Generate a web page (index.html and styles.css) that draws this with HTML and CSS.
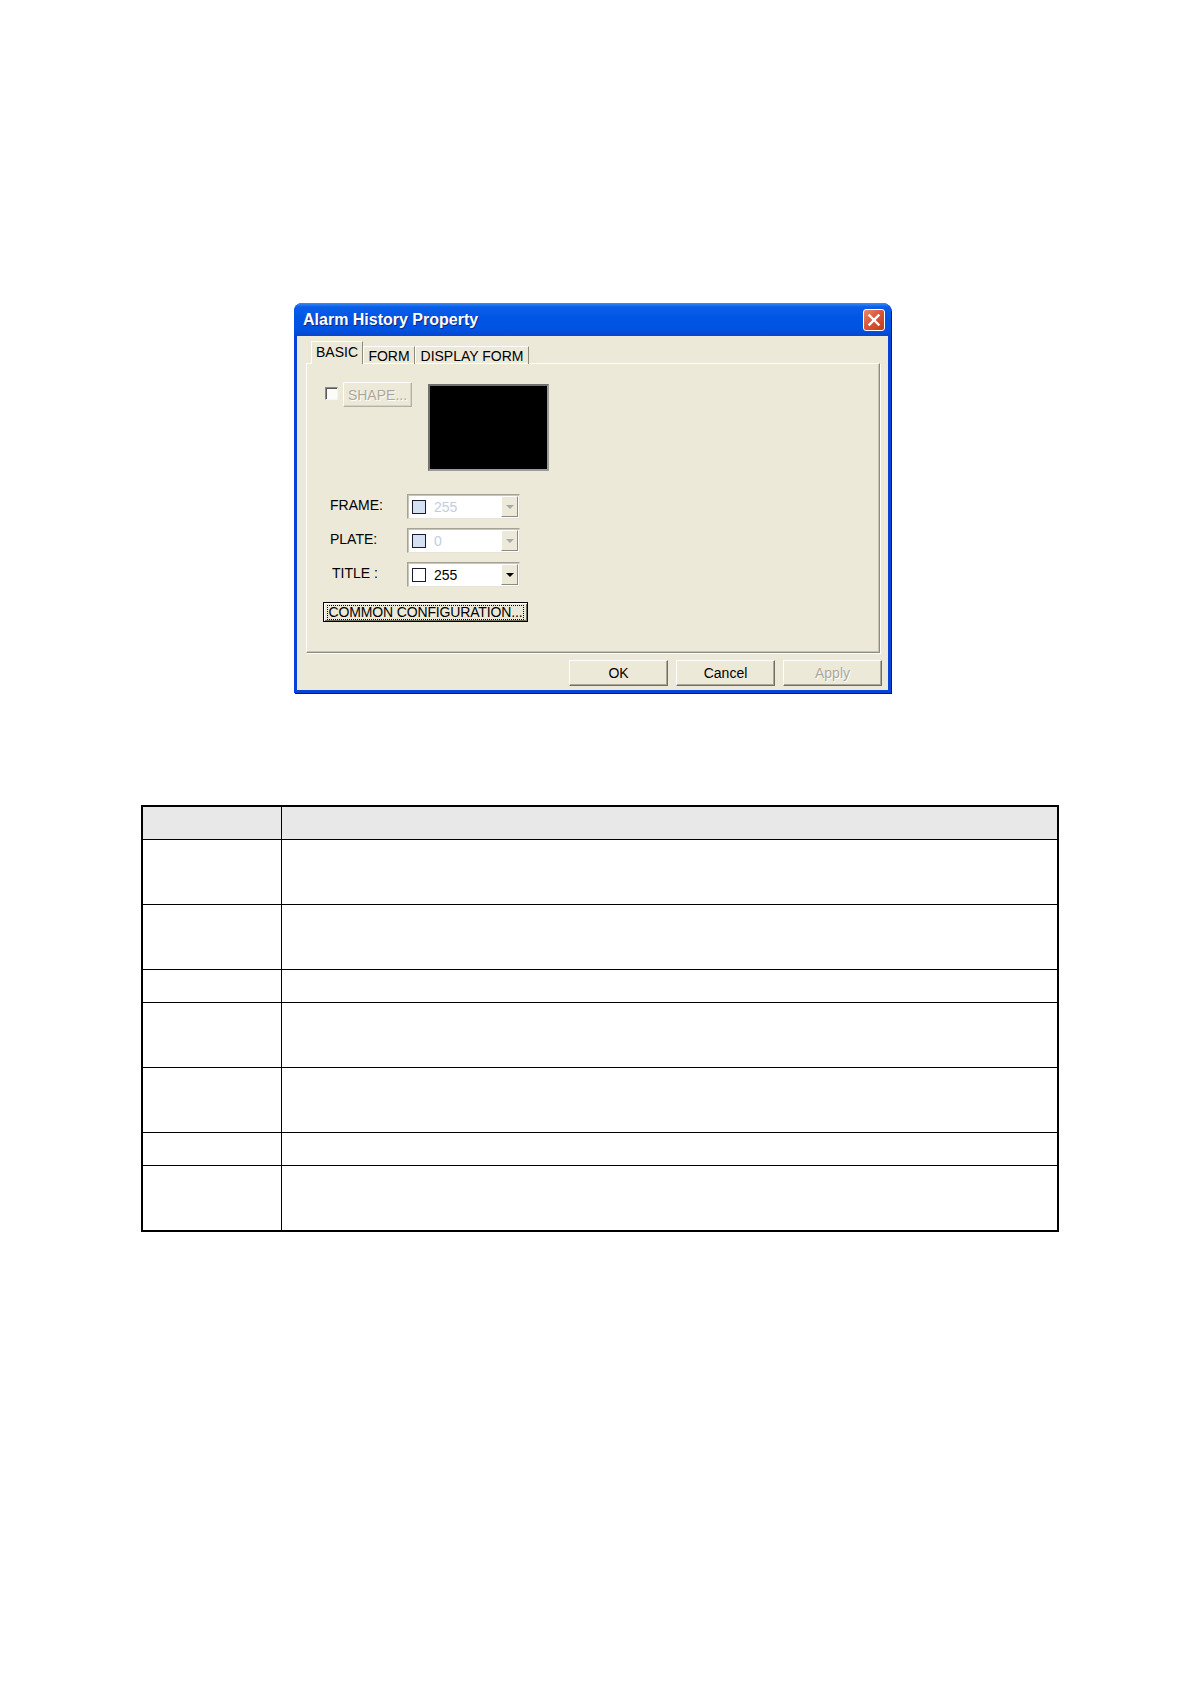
FILE: index.html
```html
<!DOCTYPE html>
<html>
<head>
<meta charset="utf-8">
<title>Alarm History Property</title>
<link rel="stylesheet" href="styles.css">
</head>
<body>
<div class="page">
  <div class="dialog">
    <div class="titlebar">
      <span class="title">Alarm History Property</span>
      <span class="close">
        <svg width="20" height="20" viewBox="0 0 20 20"><path d="M5.5 5.5 L14.5 14.5 M14.5 5.5 L5.5 14.5" stroke="#fff" stroke-width="2.4" stroke-linecap="square" fill="none"/></svg>
      </span>
    </div>
    <div class="body">
      <div class="tabs">
        <div class="tab active">BASIC</div>
        <div class="tab t-form">FORM</div>
        <div class="tab t-display">DISPLAY FORM</div>
      </div>
      <div class="panel">
        <div class="shape-row">
          <span class="check"></span>
          <span class="btn shape-btn disabled">SHAPE...</span>
          <span class="preview"></span>
        </div>
        <div class="fields">
          <span class="label">FRAME:</span>
          <div class="combo disabled">
            <span class="swatch"></span><span class="value">255</span>
            <span class="drop"><span class="tri"></span></span>
          </div>
          <span class="label">PLATE:</span>
          <div class="combo disabled">
            <span class="swatch"></span><span class="value">0</span>
            <span class="drop"><span class="tri"></span></span>
          </div>
          <span class="label label-title">TITLE :</span>
          <div class="combo">
            <span class="swatch"></span><span class="value">255</span>
            <span class="drop"><span class="tri"></span></span>
          </div>
        </div>
        <div class="common"><span class="focus">COMMON CONFIGURATION...</span></div>
      </div>
      <div class="actions">
        <span class="btn action">OK</span>
        <span class="btn action">Cancel</span>
        <span class="btn action disabled">Apply</span>
      </div>
    </div>
  </div>

  <table class="grid">
    <tr class="head"><td class="c1"></td><td></td></tr>
    <tr class="tall"><td class="c1"></td><td></td></tr>
    <tr class="tall"><td class="c1"></td><td></td></tr>
    <tr class="short"><td class="c1"></td><td></td></tr>
    <tr class="tall"><td class="c1"></td><td></td></tr>
    <tr class="tall"><td class="c1"></td><td></td></tr>
    <tr class="short"><td class="c1"></td><td></td></tr>
    <tr class="tall last"><td class="c1"></td><td></td></tr>
  </table>
</div>
</body>
</html>
```
FILE: styles.css
```css
html, body {
  margin: 0;
  padding: 0;
  background: #fff;
}
body {
  font-family: "Liberation Sans", Arial, sans-serif;
  font-size: 14px;
  color: #000;
}
.page {
  padding-top: 303px;
}

/* ---------- dialog ---------- */
.dialog {
  box-sizing: border-box;
  width: 597px;
  margin-left: 294px;
  background: #0842d6;
  border-radius: 8px 8px 0 0;
  padding: 0 3px 3px;
  box-shadow: 1px 1px 0 #0a1a60;
}
.titlebar {
  height: 33px;
  margin: 0 -3px;
  padding: 0 6px 0 9px;
  display: flex;
  align-items: center;
  justify-content: space-between;
  border-radius: 8px 8px 0 0;
  background: linear-gradient(to bottom, #3b8cf5 0%, #0a5ee8 12%, #0055e5 45%, #0052e0 80%, #0846cf 100%);
}
.title {
  color: #fff;
  font-weight: bold;
  font-size: 16px;
  text-shadow: 1px 1px 0 #0b2a8a;
  letter-spacing: 0;
}
.close {
  box-sizing: border-box;
  width: 22px;
  height: 22px;
  border: 1px solid #fff;
  border-radius: 3px;
  background: linear-gradient(135deg, #e88a6a 0%, #d8583a 45%, #c33c1c 100%);
  display: flex;
  align-items: center;
  justify-content: center;
}
.close svg { display: block; }

.body {
  background: #ece9d8;
  height: 354px;
  box-sizing: border-box;
  padding: 6px 8px 3px 9px;
  display: flex;
  flex-direction: column;
}

/* ---------- tabs ---------- */
.tabs {
  display: flex;
  align-items: flex-end;
  height: 22px;
  margin-left: 5px;
  position: relative;
  z-index: 1;
  margin-bottom: -1px;
}
.tab {
  box-sizing: border-box;
  height: 18px;
  border-top: 1px solid #fff;
  border-left: 1px solid #fff;
  border-right: 1px solid #8d8b80;
  display: flex;
  align-items: center;
  justify-content: center;
  font-size: 14px;
  padding-top: 1px;
}
.tab.active {
  width: 52px;
  height: 23px;
  padding-bottom: 3px;
  background: #ece9d8;
}
.t-form { width: 52px; }
.t-display { width: 114px; }

/* ---------- panel ---------- */
.panel {
  box-sizing: border-box;
  width: 574px;
  height: 290px;
  border-top: 1px solid #fff;
  border-left: 1px solid #fff;
  border-right: 1px solid #8d8b80;
  border-bottom: 1px solid #8d8b80;
  box-shadow: 1px 1px 0 #fff, inset -1px -1px 0 #c7c4b4;
  padding: 18px 0 0 16px;
  display: flex;
  flex-direction: column;
  align-items: flex-start;
}
.shape-row {
  display: flex;
  align-items: flex-start;
  margin-left: 2px;
}
.check {
  box-sizing: border-box;
  width: 13px;
  height: 13px;
  margin-top: 5px;
  background: #fbfbf8;
  border: 1px solid;
  border-color: #8a8a8a #f4f4f4 #f4f4f4 #8a8a8a;
  box-shadow: inset 1px 1px 0 #5a5a5a;
}
.btn {
  box-sizing: border-box;
  display: flex;
  align-items: center;
  justify-content: center;
  background: #ece9d8;
  border: 1px solid;
  border-color: #fff #716f64 #716f64 #fff;
  box-shadow: inset -1px -1px 0 #aca899;
  font-size: 14px;
}
.btn.disabled {
  color: #aca899;
  text-shadow: 1px 1px 0 #fff;
}
.shape-btn {
  width: 69px;
  height: 25px;
  margin-left: 5px;
  border-color: #fff #b4b2a6 #b4b2a6 #fff;
  box-shadow: inset -1px -1px 0 #d6d3c4;
}
.preview {
  box-sizing: border-box;
  width: 121px;
  height: 87px;
  margin-left: 16px;
  margin-top: 2px;
  background: #000;
  border: 2px solid;
  border-color: #707070 #9c9c9c #9c9c9c #707070;
}

/* ---------- fields ---------- */
.fields {
  display: grid;
  grid-template-columns: 77px 113px;
  grid-auto-rows: 25px;
  row-gap: 9px;
  margin-top: 23px;
  margin-left: 7px;
  align-items: center;
}
.label {
  font-size: 14px;
  padding-bottom: 3px;
}
.label-title { padding-left: 2px; }
.combo {
  box-sizing: border-box;
  height: 25px;
  width: 113px;
  display: flex;
  align-items: center;
  background: #fff;
  border: 1px solid;
  border-color: #a5a396 #e6e4da #e6e4da #a5a396;
  box-shadow: inset 1px 1px 0 #c8c6b8;
}
.swatch {
  box-sizing: border-box;
  width: 14px;
  height: 14px;
  margin-left: 4px;
  border: 1px solid #1c1c30;
  background: #fff;
}
.combo.disabled .swatch { background: #d3e1f3; }
.value {
  margin-left: 8px;
  font-size: 14px;
}
.combo.disabled .value { color: #c5cddc; }
.drop {
  box-sizing: border-box;
  margin-left: auto;
  margin-right: 1px;
  width: 17px;
  height: 21px;
  background: #ece9d8;
  border: 1px solid;
  border-color: #fff #8d8b80 #8d8b80 #fff;
  display: flex;
  align-items: center;
  justify-content: center;
}
.tri {
  width: 0;
  height: 0;
  border-left: 4px solid transparent;
  border-right: 4px solid transparent;
  border-top: 4px solid #000;
}
.combo.disabled .tri { border-top-color: #a8a8a8; }

/* ---------- common button ---------- */
.common {
  box-sizing: border-box;
  width: 205px;
  height: 20px;
  margin-top: 15px;
  border: 1px solid #000;
  background: #ece9d8;
  box-shadow: inset 1px 1px 0 #fff, inset -1px -1px 0 #716f64;
  display: flex;
  align-items: center;
  justify-content: center;
}
.focus {
  box-sizing: border-box;
  border: 1px dotted #000;
  height: 15px;
  line-height: 13px;
  padding: 0 1px;
  font-size: 14px;
  letter-spacing: -0.15px;
  white-space: nowrap;
}

/* ---------- action buttons ---------- */
.actions {
  display: flex;
  justify-content: flex-end;
  gap: 8px;
  margin-top: 7px;
  padding-right: 0;
  margin-right: -2px;
}
.action {
  width: 99px;
  height: 26px;
}

/* ---------- table ---------- */
.grid {
  box-sizing: border-box;
  width: 918px;
  margin-left: 141px;
  margin-top: 112px;
  border-collapse: separate;
  border-spacing: 0;
  border: 2px solid #000;
}
.grid td {
  padding: 0;
  border-bottom: 1px solid #000;
}
.grid td.c1 {
  width: 138px;
  border-right: 1px solid #000;
}
.grid tr.head td {
  height: 32px;
  background: #e8e8e8;
}
.grid tr.tall td { height: 64px; }
.grid tr.short td { height: 32px; }
.grid tr.last td {
  border-bottom: 0;
  height: 64px;
}
```
